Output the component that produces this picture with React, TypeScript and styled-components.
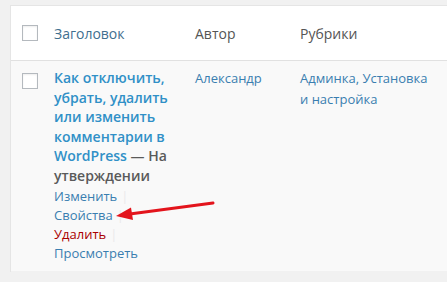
import styled, { createGlobalStyle } from "styled-components";

const GlobalStyle = createGlobalStyle`
  html, body {
    margin: 0;
    padding: 0;
    background: #f1f1f1;
    font-family: "Open Sans", "Noto Sans", sans-serif;
  }
`;

export default function App(): JSX.Element {
  return (
    <Page>
      <GlobalStyle />
      <Table>
        <HeadRow>
          <CheckCell>
            <CheckBox />
          </CheckCell>
          <HeadCell $link>Заголовок</HeadCell>
          <HeadCell>Автор</HeadCell>
          <HeadCell>Рубрики</HeadCell>
        </HeadRow>
        <BodyRow>
          <CheckCell $top>
            <CheckBox />
          </CheckCell>
          <Cell>
            <PostTitle>
              <TitleLink>Как отключить, убрать, удалить или изменить комментарии в WordPress</TitleLink>
              <PostState> — На утверждении</PostState>
            </PostTitle>
            <Actions>
              <Action>Изменить</Action>
              <Action>Свойства</Action>
              <Action $danger>Удалить</Action>
              <Action $last>Просмотреть</Action>
            </Actions>
          </Cell>
          <Cell>
            <MetaLink>Александр</MetaLink>
          </Cell>
          <Cell>
            <MetaLink>Админка, Установка и настройка</MetaLink>
          </Cell>
        </BodyRow>
      </Table>
      <Arrow width="447" height="282" viewBox="0 0 447 282">
        <line x1="213" y1="203" x2="126" y2="214.5" stroke="#e3141c" strokeWidth="3" strokeLinecap="round" />
        <polygon points="116,216 131,207.5 133,220" fill="#e3141c" />
      </Arrow>
    </Page>
  );
}

const Page = styled("div")`
  position: relative;
  width: 447px;
  height: 282px;
  padding: 5px 0 0 10px;
  box-sizing: border-box;
  overflow: hidden;
`;

const Table = styled("div")`
  background: #fff;
  border-top: 1px solid #e5e5e5;
  border-left: 1px solid #e5e5e5;
`;

const HeadRow = styled("div")`
  display: grid;
  grid-template-columns: 33px 141px 105px 1fr;
  align-items: center;
  height: 54px;
  border-bottom: 1px solid #e1e1e1;
  background: #fff;
`;

const BodyRow = styled("div")`
  display: grid;
  grid-template-columns: 33px 141px 105px 1fr;
  align-items: start;
  background: #f9f9f9;
  padding: 7px 0 8px;
  border-bottom: 1px solid #f1f1f1;
`;

const CheckCell = styled("div")<{ $top?: boolean }>`
  padding-left: 11px;
  padding-top: ${(p) => (p.$top ? "5px" : "0")};
  display: flex;
`;

const CheckBox = styled("span")`
  display: block;
  width: 14px;
  height: 14px;
  border: 1px solid #b4b9be;
  background: #fff;
  box-shadow: inset 0 1px 2px rgba(0, 0, 0, 0.07);
`;

const HeadCell = styled("div")<{ $link?: boolean }>`
  padding: 0 10px;
  font-size: 14px;
  color: ${(p) => (p.$link ? "#3f6f8f" : "#555")};
`;

const Cell = styled("div")`
  padding: 0 10px;
`;

const PostTitle = styled("div")`
  font-size: 14px;
  font-weight: 600;
  line-height: 19.5px;
`;

const TitleLink = styled("span")`
  color: #3090c7;
`;

const PostState = styled("span")`
  color: #5a5a5a;
`;

const Actions = styled("div")`
  display: flex;
  flex-direction: column;
  margin-top: 2px;
`;

const Action = styled("span")<{ $danger?: boolean; $last?: boolean }>`
  font-size: 13px;
  line-height: 19px;
  color: ${(p) => (p.$danger ? "#a00" : "#3a7eb0")};
  &::after {
    content: ${(p) => (p.$last ? "none" : "'|'")};
    color: #eaeaea;
    margin-left: 4px;
  }
`;

const MetaLink = styled("span")`
  display: block;
  font-size: 13px;
  line-height: 21px;
  color: #3a7eb0;
`;

const Arrow = styled("svg")`
  position: absolute;
  left: 0;
  top: 0;
  pointer-events: none;
`;
